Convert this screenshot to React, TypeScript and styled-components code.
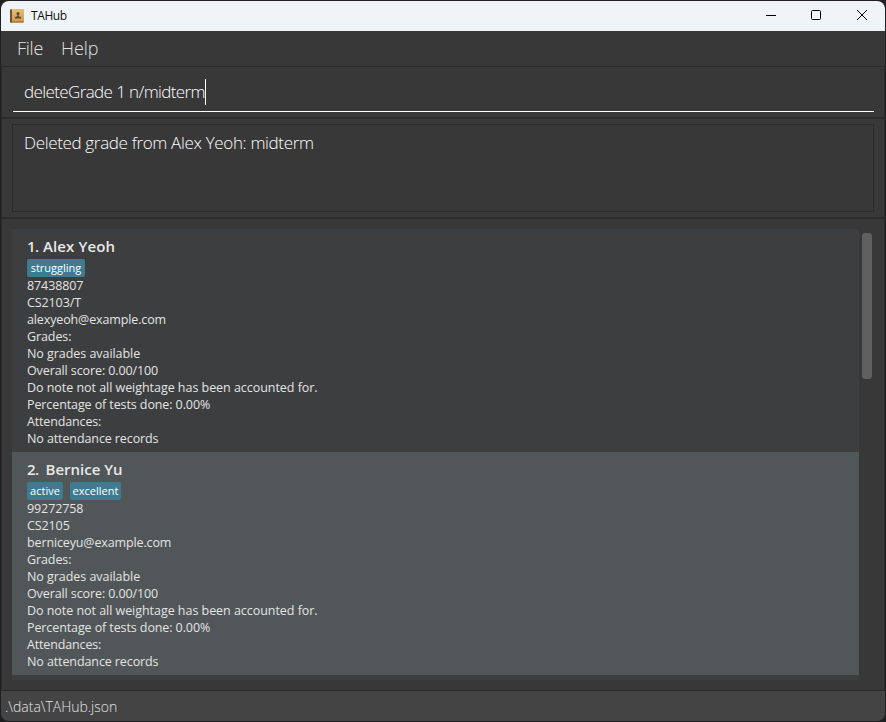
import React from "react";
import styled, { createGlobalStyle } from "styled-components";

const GlobalStyle = createGlobalStyle`
  *, *::before, *::after { box-sizing: border-box; }
  body { margin: 0; background: #18181a; overflow: hidden; }
`;

const light = `"Open Sans", "Noto Sans", sans-serif`;

const Desktop = styled.div`
  width: 886px;
  height: 722px;
  padding: 1px;
  background: #202022;
`;

const Window = styled.div`
  display: flex;
  flex-direction: column;
  width: 884px;
  height: 720px;
  border-radius: 8px;
  overflow: hidden;
  background: #383838;
  font-family: ${light};
  white-space: nowrap;
`;

const TitleBar = styled.header`
  display: flex;
  align-items: center;
  height: 30px;
  flex: none;
  padding-left: 8px;
  background: #eff4f9;
`;

const Title = styled.span`
  flex: 1;
  padding-left: 6px;
  font-size: 12px;
  line-height: 28px;
  letter-spacing: -0.4px;
  color: #111;
`;

const WindowButton = styled.button<{ $width?: number }>`
  display: grid;
  place-items: center;
  width: ${(p) => p.$width ?? 46}px;
  height: 30px;
  padding: 0 0 2px;
  border: 0;
  background: none;
`;

const MenuBar = styled.nav`
  display: flex;
  gap: 18px;
  height: 35px;
  flex: none;
  padding-left: 16px;
`;

const MenuItem = styled.span<{ $spacing: number }>`
  font-size: 18px;
  font-weight: 300;
  line-height: 35px;
  letter-spacing: ${(p) => p.$spacing}px;
  color: #e2e2e2;
`;

const Pane = styled.section<{ $height: number }>`
  height: ${(p) => p.$height}px;
  flex: none;
  border: 1px solid #2b2b2b;
`;

const CommandPane = styled(Pane)`
  padding: 5px 10px 0 11px;
`;

const CommandField = styled.div`
  display: flex;
  align-items: center;
  height: 40px;
  padding-left: 11px;
  border-bottom: 1px solid #fff;
`;

const PaneText = styled.span<{ $spacing: number }>`
  font-size: 17px;
  font-weight: 300;
  line-height: 24px;
  letter-spacing: ${(p) => p.$spacing}px;
  color: #fff;
`;

const Caret = styled.span`
  width: 1px;
  height: 26px;
  background: #fff;
`;

const ResultPane = styled(Pane)`
  padding: 5px 10px;
`;

const ResultBox = styled.div`
  height: 88px;
  padding: 6px 11px;
  border: 1px solid #2b2b2b;
`;

const ListPane = styled(Pane)`
  display: flex;
  gap: 3px;
  padding: 10px 10px 10px;
`;

const PersonList = styled.ol`
  width: 847px;
  height: 451px;
  margin: 0;
  padding: 0;
  list-style: none;
  background: #3c3e3f;
`;

const PersonCard = styled.li<{ $alt?: boolean }>`
  height: 223px;
  padding: 5px 15px;
  background: ${(p) => (p.$alt ? "#515658" : "#3c3e3f")};
`;

const Name = styled.h2<{ $spacing: number }>`
  display: flex;
  margin: 0;
  height: 25px;
  font-size: 15px;
  font-weight: 600;
  line-height: 24px;
  letter-spacing: ${(p) => p.$spacing}px;
  color: #e8e8e8;
`;

const Index = styled.span<{ $width: number }>`
  width: ${(p) => p.$width}px;
  letter-spacing: -0.7px;
`;

const Tags = styled.div`
  display: flex;
  gap: 7px;
  height: 18px;
`;

const Tag = styled.span<{ $width: number }>`
  width: ${(p) => p.$width}px;
  height: 18px;
  border-radius: 2px;
  background: #3e7b91;
  font-size: 11px;
  line-height: 18px;
  text-align: center;
  color: #fff;
`;

const Detail = styled.p<{ $spacing?: number }>`
  margin: 0;
  font-size: 12.5px;
  line-height: 17px;
  letter-spacing: ${(p) => p.$spacing ?? -0.1}px;
  color: #e4e4e4;
`;

const ScrollThumb = styled.div`
  width: 10px;
  height: 146px;
  margin-top: 4px;
  border-radius: 3px;
  background: #5f5f5f;
`;

const StatusBar = styled.footer`
  flex: 1;
  padding-left: 4px;
  background: #444;
  font-size: 14px;
  font-weight: 300;
  line-height: 31px;
  letter-spacing: -0.03px;
  color: #e4e4e4;
`;

const BookIcon = () => (
  <svg width="16" height="16" viewBox="0 0 16 16">
    <defs>
      <linearGradient id="cover" x1="0" y1="0" x2="0" y2="1">
        <stop offset="0" stopColor="#e9bd75" />
        <stop offset="1" stopColor="#d09a4c" />
      </linearGradient>
    </defs>
    <rect x="1" y="1" width="14" height="13.5" rx="0.8" fill="url(#cover)" />
    <path d="M1 1.5h2v13H1z" fill="#6c5134" />
    <path d="M1.5 14h13" stroke="#8c6428" />
    <circle cx="9" cy="5.5" r="1.5" fill="#5c482e" />
    <path d="M8.3 6.6h1.4v1.7l2.4 0.8v1.5H6V9.1l2.3-0.8z" fill="#5c482e" />
  </svg>
);

interface Person {
  name: string;
  indexWidth: number;
  spacing: number;
  tags: { label: string; width: number }[];
  phone: string;
  course: string;
  email: string;
}

const people: Person[] = [
  {
    name: "Alex Yeoh",
    indexWidth: 16,
    spacing: 0.12,
    tags: [{ label: "struggling", width: 58 }],
    phone: "87438807",
    course: "CS2103/T",
    email: "alexyeoh@example.com",
  },
  {
    name: "Bernice Yu",
    indexWidth: 18.5,
    spacing: 0,
    tags: [
      { label: "active", width: 36 },
      { label: "excellent", width: 51 },
    ],
    phone: "99272758",
    course: "CS2105",
    email: "berniceyu@example.com",
  },
];

export default function App() {
  return (
    <Desktop>
      <GlobalStyle />
      <Window>
        <TitleBar>
          <BookIcon />
          <Title>TAHub</Title>
          <WindowButton $width={44} aria-label="Minimize">
            <svg width="12" height="12" fill="none" stroke="#000">
              <path d="M1 6.5h10" />
            </svg>
          </WindowButton>
          <WindowButton aria-label="Maximize">
            <svg width="12" height="12" fill="none" stroke="#000">
              <rect x="1.5" y="1.5" width="9" height="9" rx="1" />
            </svg>
          </WindowButton>
          <WindowButton aria-label="Close">
            <svg width="12" height="12" fill="none" stroke="#000">
              <path d="M1 1l10 10M11 1L1 11" />
            </svg>
          </WindowButton>
        </TitleBar>
        <MenuBar>
          <MenuItem $spacing={-0.25}>File</MenuItem>
          <MenuItem $spacing={-0.1}>Help</MenuItem>
        </MenuBar>
        <CommandPane $height={52}>
          <CommandField>
            <PaneText $spacing={-0.61}>deleteGrade 1 n/midterm</PaneText>
            <Caret />
          </CommandField>
        </CommandPane>
        <ResultPane $height={100}>
          <ResultBox>
            <PaneText $spacing={-0.34}>Deleted grade from Alex Yeoh: midterm</PaneText>
          </ResultBox>
        </ResultPane>
        <ListPane $height={473}>
          <PersonList>
            {people.map((person, i) => (
              <PersonCard key={person.email} $alt={i % 2 === 1}>
                <Name $spacing={person.spacing}>
                  <Index $width={person.indexWidth}>{i + 1}.</Index>
                  <span>{person.name}</span>
                </Name>
                <Tags>
                  {person.tags.map((tag) => (
                    <Tag key={tag.label} $width={tag.width}>
                      {tag.label}
                    </Tag>
                  ))}
                </Tags>
                <Detail>{person.phone}</Detail>
                <Detail>{person.course}</Detail>
                <Detail $spacing={-0.13}>{person.email}</Detail>
                <Detail>Grades:</Detail>
                <Detail $spacing={-0.05}>No grades available</Detail>
                <Detail>Overall score: 0.00/100</Detail>
                <Detail $spacing={-0.04}>
                  Do note not all weightage has been accounted for.
                </Detail>
                <Detail>Percentage of tests done: 0.00%</Detail>
                <Detail $spacing={-0.15}>Attendances:</Detail>
                <Detail>No attendance records</Detail>
              </PersonCard>
            ))}
          </PersonList>
          <ScrollThumb />
        </ListPane>
        <StatusBar>.\data\TAHub.json</StatusBar>
      </Window>
    </Desktop>
  );
}
